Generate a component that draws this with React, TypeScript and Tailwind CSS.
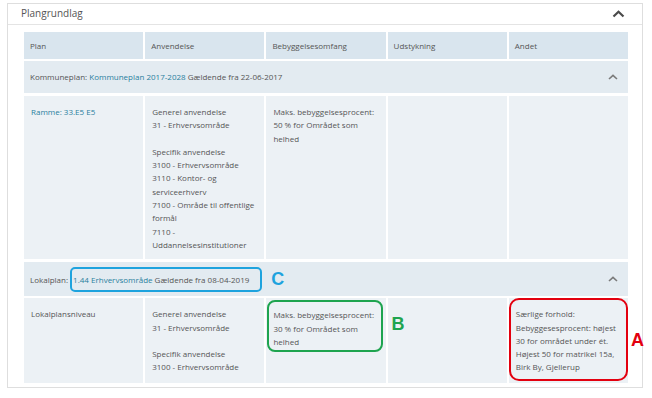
import React from "react";

const headers = ["Plan", "Anvendelse", "Bebyggelsesomfang", "Udstykning", "Andet"];

const anvendelse1 = [
  "Generel anvendelse",
  "31 - Erhvervsområde",
  "",
  "Specifik anvendelse",
  "3100 - Erhvervsområde",
  "3110 - Kontor- og",
  "serviceerhverv",
  "7100 - Område til offentlige",
  "formål",
  "7110 -",
  "Uddannelsesinstitutioner",
];

const anvendelse2 = [
  "Generel anvendelse",
  "31 - Erhvervsområde",
  "",
  "Specifik anvendelse",
  "3100 - Erhvervsområde",
];

const andet2 = [
  "Særlige forhold:",
  "Bebyggesesprocent: højest",
  "30 for området under ét.",
  "Højest 50 for matrikel 15a,",
  "Birk By, Gjellerup",
];

function Lines({ lines }: { lines: string[] }) {
  return (
    <>
      {lines.map((l, i) => (
        <div key={i} className="whitespace-nowrap">
          {l || "\u00a0"}
        </div>
      ))}
    </>
  );
}

function Chevron({ big }: { big?: boolean }) {
  if (big) {
    return (
      <svg width="13" height="8" viewBox="0 0 13 8" className="block">
        <polyline points="1.5,6.5 6.5,1.8 11.5,6.5" fill="none" stroke="#4a4a4a" strokeWidth="2.2" />
      </svg>
    );
  }
  return (
    <svg width="10" height="6" viewBox="0 0 10 6" className="block">
      <polyline points="1,5 5,1.3 9,5" fill="none" stroke="#7a7a7a" strokeWidth="1.6" />
    </svg>
  );
}

export default function App() {
  return (
    <div className="relative w-[652px] h-[398px] bg-white pt-[3px] pl-[7px] font-['Open_Sans',sans-serif] text-[8px] leading-[13.3px] text-[#555]">
      <div className="w-[636px] h-[385px] border border-[#dedede] bg-white">
        {/* header */}
        <div className="flex h-[21px] items-center justify-between border-b border-[#e4e4e4] pl-[13px] pr-[17px]">
          <span className="text-[10px] text-[#555]">Plangrundlag</span>
          <Chevron big />
        </div>

        <div className="pl-[16px] pt-[7px]">
          <div className="w-[604px]">
            {/* column headers */}
            <div className="grid h-[27px] grid-cols-5 gap-x-[2px]">
              {headers.map((h) => (
                <div key={h} className="flex items-center bg-[#d9e5ee] pl-[6px]">
                  {h}
                </div>
              ))}
            </div>

            {/* kommuneplan */}
            <div className="mt-[2px] flex h-[32px] items-center justify-between bg-[#e3ebf1] pl-[6px] pr-[10px]">
              <div>
                Kommuneplan: <span className="text-[#2a7f9e]">Kommuneplan 2017-2028</span> Gældende fra 22-06-2017
              </div>
              <Chevron />
            </div>

            <div className="mt-[3px] grid grid-cols-5 gap-x-[2px]">
              <div className="bg-[#ecf1f5] pl-[7px] pt-[9px] pb-[8px] text-[#2a7f9e]">Ramme: 33.E5 E5</div>
              <div className="bg-[#ecf1f5] pl-[7px] pt-[9px] pb-[8px]">
                <Lines lines={anvendelse1} />
              </div>
              <div className="bg-[#ecf1f5] pl-[7px] pt-[9px] pb-[8px]">
                <Lines lines={["Maks. bebyggelsesprocent:", "50 % for Området som", "helhed"]} />
              </div>
              <div className="bg-[#ecf1f5]" />
              <div className="bg-[#ecf1f5]" />
            </div>

            {/* lokalplan */}
            <div className="mt-[3px] flex h-[34px] items-center justify-between bg-[#e3ebf1] pl-[6px] pr-[10px]">
              <div className="flex items-center whitespace-pre">
                <span>Lokalplan: </span>
                <span className="flex h-[25px] items-center rounded-[5px] border-2 border-[#1ea3de] pl-[1px] pr-[11px]">
                  <span className="text-[#2a7f9e]">1.44 Erhvervsområde</span>
                  <span> Gældende fra 08-04-2019</span>
                </span>
                <span className="ml-[9px] font-['Liberation_Sans',sans-serif] text-[18px] font-bold leading-none text-[#1ea3de]">C</span>
              </div>
              <Chevron />
            </div>

            <div className="mt-[2px] grid h-[85px] grid-cols-5 gap-x-[2px]">
              <div className="bg-[#ecf1f5] pl-[7px] pt-[9px]">Lokalplansniveau</div>
              <div className="bg-[#ecf1f5] pl-[7px] pt-[9px]">
                <Lines lines={anvendelse2} />
              </div>
              <div className="bg-[#ecf1f5] pl-[1px] pt-[2px]">
                <div className="h-[52px] w-[116px] rounded-[8px] border-2 border-[#1ea44f] pl-[4px] pt-[6px]">
                  <Lines lines={["Maks. bebyggelsesprocent:", "30 % for Området som", "helhed"]} />
                </div>
              </div>
              <div className="bg-[#ecf1f5] pl-[4px] pt-[17px]">
                <span className="font-['Liberation_Sans',sans-serif] text-[18px] font-bold leading-none text-[#1ea44f]">B</span>
              </div>
              <div className="bg-[#ecf1f5] pb-[2px]">
                <div className="h-full rounded-[10px] border-2 border-[#e3000f] pl-[5px] pt-[7px]">
                  <Lines lines={andet2} />
                </div>
              </div>
            </div>
          </div>
        </div>
      </div>

      <span className="absolute left-[631px] top-[331px] font-['Liberation_Sans',sans-serif] text-[18px] font-bold leading-none text-[#e3000f]">
        A
      </span>
    </div>
  );
}
